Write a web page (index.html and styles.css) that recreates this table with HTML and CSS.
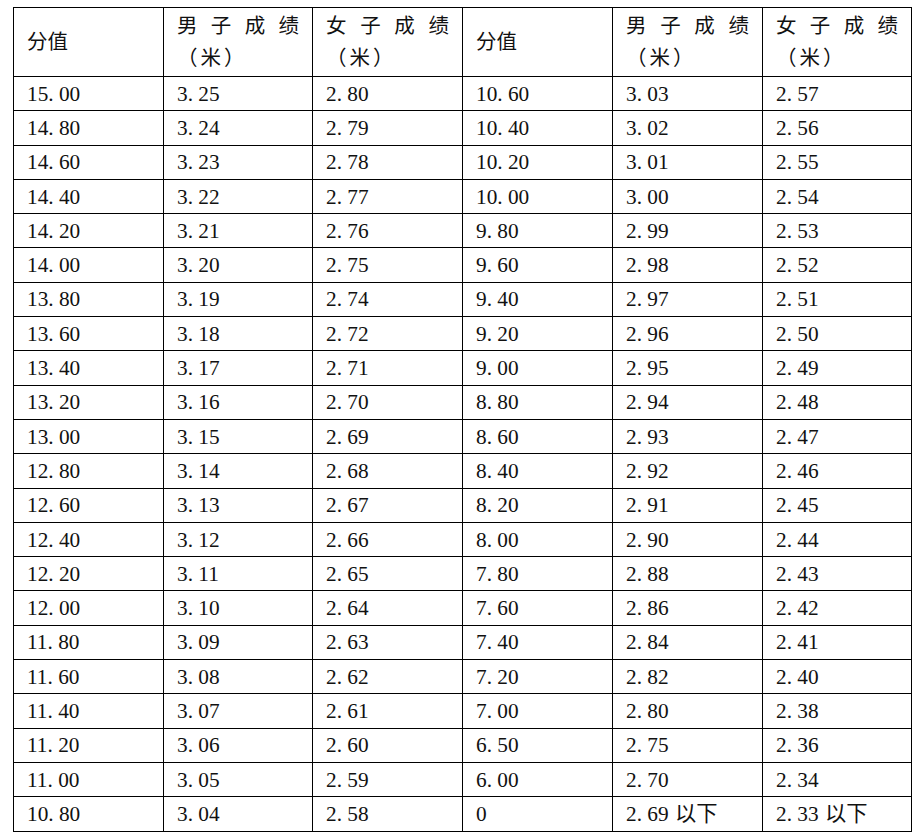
FILE: index.html
```html
<!DOCTYPE html>
<html lang="zh-CN">
<head>
<meta charset="utf-8">
<title>分值表</title>
<link rel="stylesheet" href="styles.css">
</head>
<body>
<table class="score">
<colgroup>
<col class="c1"><col class="c2"><col class="c3"><col class="c4"><col class="c5"><col class="c6">
</colgroup>
<thead>
<tr class="head">
<th>分值</th><th class="jt">男子成绩<span class="unit">（米）</span></th><th class="jt">女子成绩<span class="unit">（米）</span></th>
<th>分值</th><th class="jt">男子成绩<span class="unit">（米）</span></th><th class="jt">女子成绩<span class="unit">（米）</span></th>
</tr>
</thead>
<tbody>
<tr><td>15<span class="d">.</span>00</td><td>3<span class="d">.</span>25</td><td>2<span class="d">.</span>80</td><td>10<span class="d">.</span>60</td><td>3<span class="d">.</span>03</td><td>2<span class="d">.</span>57</td></tr>
<tr><td>14<span class="d">.</span>80</td><td>3<span class="d">.</span>24</td><td>2<span class="d">.</span>79</td><td>10<span class="d">.</span>40</td><td>3<span class="d">.</span>02</td><td>2<span class="d">.</span>56</td></tr>
<tr><td>14<span class="d">.</span>60</td><td>3<span class="d">.</span>23</td><td>2<span class="d">.</span>78</td><td>10<span class="d">.</span>20</td><td>3<span class="d">.</span>01</td><td>2<span class="d">.</span>55</td></tr>
<tr><td>14<span class="d">.</span>40</td><td>3<span class="d">.</span>22</td><td>2<span class="d">.</span>77</td><td>10<span class="d">.</span>00</td><td>3<span class="d">.</span>00</td><td>2<span class="d">.</span>54</td></tr>
<tr><td>14<span class="d">.</span>20</td><td>3<span class="d">.</span>21</td><td>2<span class="d">.</span>76</td><td>9<span class="d">.</span>80</td><td>2<span class="d">.</span>99</td><td>2<span class="d">.</span>53</td></tr>
<tr><td>14<span class="d">.</span>00</td><td>3<span class="d">.</span>20</td><td>2<span class="d">.</span>75</td><td>9<span class="d">.</span>60</td><td>2<span class="d">.</span>98</td><td>2<span class="d">.</span>52</td></tr>
<tr><td>13<span class="d">.</span>80</td><td>3<span class="d">.</span>19</td><td>2<span class="d">.</span>74</td><td>9<span class="d">.</span>40</td><td>2<span class="d">.</span>97</td><td>2<span class="d">.</span>51</td></tr>
<tr><td>13<span class="d">.</span>60</td><td>3<span class="d">.</span>18</td><td>2<span class="d">.</span>72</td><td>9<span class="d">.</span>20</td><td>2<span class="d">.</span>96</td><td>2<span class="d">.</span>50</td></tr>
<tr><td>13<span class="d">.</span>40</td><td>3<span class="d">.</span>17</td><td>2<span class="d">.</span>71</td><td>9<span class="d">.</span>00</td><td>2<span class="d">.</span>95</td><td>2<span class="d">.</span>49</td></tr>
<tr><td>13<span class="d">.</span>20</td><td>3<span class="d">.</span>16</td><td>2<span class="d">.</span>70</td><td>8<span class="d">.</span>80</td><td>2<span class="d">.</span>94</td><td>2<span class="d">.</span>48</td></tr>
<tr><td>13<span class="d">.</span>00</td><td>3<span class="d">.</span>15</td><td>2<span class="d">.</span>69</td><td>8<span class="d">.</span>60</td><td>2<span class="d">.</span>93</td><td>2<span class="d">.</span>47</td></tr>
<tr><td>12<span class="d">.</span>80</td><td>3<span class="d">.</span>14</td><td>2<span class="d">.</span>68</td><td>8<span class="d">.</span>40</td><td>2<span class="d">.</span>92</td><td>2<span class="d">.</span>46</td></tr>
<tr><td>12<span class="d">.</span>60</td><td>3<span class="d">.</span>13</td><td>2<span class="d">.</span>67</td><td>8<span class="d">.</span>20</td><td>2<span class="d">.</span>91</td><td>2<span class="d">.</span>45</td></tr>
<tr><td>12<span class="d">.</span>40</td><td>3<span class="d">.</span>12</td><td>2<span class="d">.</span>66</td><td>8<span class="d">.</span>00</td><td>2<span class="d">.</span>90</td><td>2<span class="d">.</span>44</td></tr>
<tr><td>12<span class="d">.</span>20</td><td>3<span class="d">.</span>11</td><td>2<span class="d">.</span>65</td><td>7<span class="d">.</span>80</td><td>2<span class="d">.</span>88</td><td>2<span class="d">.</span>43</td></tr>
<tr><td>12<span class="d">.</span>00</td><td>3<span class="d">.</span>10</td><td>2<span class="d">.</span>64</td><td>7<span class="d">.</span>60</td><td>2<span class="d">.</span>86</td><td>2<span class="d">.</span>42</td></tr>
<tr><td>11<span class="d">.</span>80</td><td>3<span class="d">.</span>09</td><td>2<span class="d">.</span>63</td><td>7<span class="d">.</span>40</td><td>2<span class="d">.</span>84</td><td>2<span class="d">.</span>41</td></tr>
<tr><td>11<span class="d">.</span>60</td><td>3<span class="d">.</span>08</td><td>2<span class="d">.</span>62</td><td>7<span class="d">.</span>20</td><td>2<span class="d">.</span>82</td><td>2<span class="d">.</span>40</td></tr>
<tr><td>11<span class="d">.</span>40</td><td>3<span class="d">.</span>07</td><td>2<span class="d">.</span>61</td><td>7<span class="d">.</span>00</td><td>2<span class="d">.</span>80</td><td>2<span class="d">.</span>38</td></tr>
<tr><td>11<span class="d">.</span>20</td><td>3<span class="d">.</span>06</td><td>2<span class="d">.</span>60</td><td>6<span class="d">.</span>50</td><td>2<span class="d">.</span>75</td><td>2<span class="d">.</span>36</td></tr>
<tr><td>11<span class="d">.</span>00</td><td>3<span class="d">.</span>05</td><td>2<span class="d">.</span>59</td><td>6<span class="d">.</span>00</td><td>2<span class="d">.</span>70</td><td>2<span class="d">.</span>34</td></tr>
<tr><td>10<span class="d">.</span>80</td><td>3<span class="d">.</span>04</td><td>2<span class="d">.</span>58</td><td>0</td><td>2<span class="d">.</span>69 以下</td><td>2<span class="d">.</span>33 以下</td></tr>
</tbody>
</table>
</body>
</html>
```
FILE: styles.css
```css
html, body {
  margin: 0;
  padding: 0;
  background: #fff;
}

.score {
  margin: 7px 0 0 13px;
  border-collapse: collapse;
  table-layout: fixed;
  width: 898px;
  font-family: "Liberation Serif", "Noto Sans CJK SC", serif;
  font-size: 21.3px;
  color: #111;
  word-spacing: 1px;
}

.c1, .c3, .c4, .c5 { width: 150px; }
.c2 { width: 149px; }
.c6 { width: 149px; }

.score th,
.score td {
  border: 1px solid #000;
  padding: 0 13px;
  text-align: left;
  vertical-align: middle;
  font-weight: normal;
}

.score th {
  height: 64px;
  padding-bottom: 4px;
  line-height: 32px;
  font-family: "Noto Sans CJK SC", sans-serif;
  font-size: 20.5px;
}

.score th.jt {
  text-align: justify;
  text-justify: inter-character;
}

.unit {
  letter-spacing: 3px;
}

.score td {
  height: 33.3px;
  line-height: 24px;
}

.d {
  letter-spacing: 0.25em;
}
```
